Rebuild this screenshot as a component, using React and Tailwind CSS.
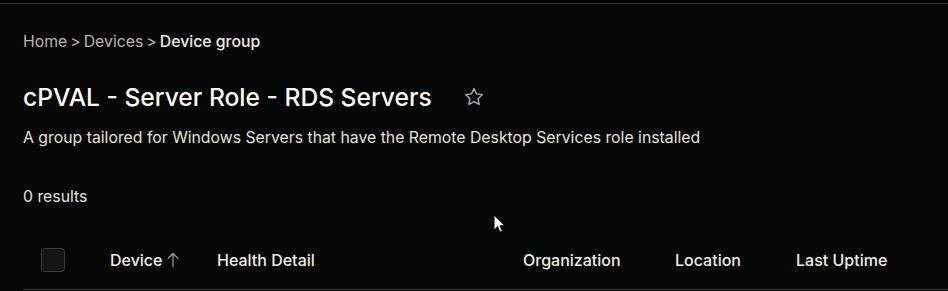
export default function App() {
  return (
    <div className="relative h-[291px] w-[948px] overflow-hidden bg-[#050707] font-['Inter',sans-serif]">
      <div className="h-[3px] bg-black" />
      <div className="h-px bg-[#363a39]" />
      <div className="pl-[23px]">
        <nav className="mt-[26px] flex items-center text-[15.8px] leading-6 text-[#bdb4a8]">
          <span>Home</span>
          <span className="mx-[3px]">&gt;</span>
          <span>Devices</span>
          <span className="mx-[3px]">&gt;</span>
          <span className="font-medium text-[#f3ede2]">Device group</span>
        </nav>
        <div className="mt-[27px] flex items-center">
          <h1 className="text-[24.6px] font-medium leading-8 text-[#fffaf0]">cPVAL - Server Role - RDS Servers</h1>
          <svg className="ml-[31px] h-[22px] w-[22px] text-[#a7b3bb]" viewBox="0 0 24 24" fill="none" stroke="currentColor" strokeWidth="1.5" strokeLinejoin="round">
            <path d="M12 2.8l2.8 5.8 6.3.8-4.6 4.4 1.1 6.3L12 17.1l-5.6 3 1.1-6.3-4.6-4.4 6.3-.8z" />
          </svg>
        </div>
        <p className="mt-[13px] text-[15.8px] leading-6 text-[#e8e1d5]">
          A group tailored for Windows Servers that have the Remote Desktop Services role installed
        </p>
        <p className="mt-[35px] text-[15.8px] leading-6 text-[#e8e1d5]">0 results</p>
        <div className="mt-[22px] flex h-[59px] items-center border-b border-[#3a3d3c] text-[16px] font-medium text-[#f3ede2]">
          <div className="ml-[18px] h-6 w-6 rounded-[4px] border border-[#3b3d3d] bg-[#141515]" />
          <div className="ml-[45px] flex w-[107px] items-center">
            Device
            <svg className="ml-[2px] h-4 w-4 text-[#9ea3a6]" viewBox="0 0 16 16" fill="none" stroke="currentColor" strokeWidth="1.2" strokeLinecap="round" strokeLinejoin="round">
              <path d="M8 14.5V1.5M3.5 6L8 1.5 12.5 6" />
            </svg>
          </div>
          <div className="w-[306px]">Health Detail</div>
          <div className="w-[152px]">Organization</div>
          <div className="w-[121px]">Location</div>
          <div>Last Uptime</div>
        </div>
      </div>
      <svg className="absolute left-[493px] top-[214px] h-[20px] w-[14px]" viewBox="0 0 14 20">
        <path d="M1 1v15l3.6-3.4 2.4 5.6 2.4-1-2.4-5.4h5z" fill="#fff" stroke="#000" strokeWidth="1" />
      </svg>
    </div>
  );
}
